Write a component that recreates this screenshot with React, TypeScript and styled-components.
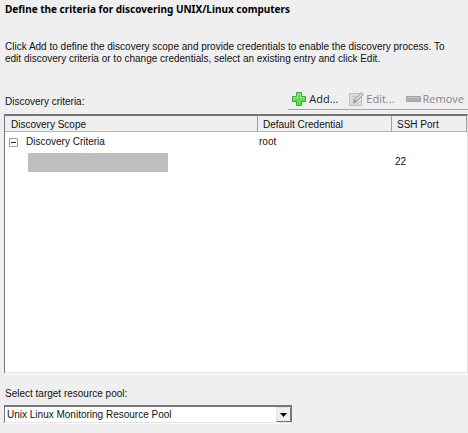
import React from 'react';
import styled, { createGlobalStyle } from 'styled-components';

const GlobalStyle = createGlobalStyle`
  *, *::before, *::after { box-sizing: border-box; }
  body {
    margin: 0;
    background: #efefef;
    color: #111;
    font: 10px/12px "Liberation Sans", Arial, sans-serif;
  }
`;

const Page = styled.main`
  display: flex;
  flex-direction: column;
  min-height: 100vh;
  padding: 2px 0 10px 4px;
`;

const Title = styled.h1`
  margin: 0;
  padding-left: 1px;
  font: bold 10px/14px "Noto Sans", Tahoma, sans-serif;
  color: #000;
`;

const Intro = styled.p`
  margin: 25px 12px 0 0;
  padding-left: 1px;
`;

const ListBar = styled.div`
  display: flex;
  justify-content: space-between;
  align-items: flex-end;
  margin: 23px 0 4px;
  padding-left: 1px;
`;

const ListLabel = styled.h2`
  margin: 0 0 2px;
  font: inherit;
`;

const Toolbar = styled.div`
  display: flex;
  gap: 11px;
  height: 22px;
  padding: 1px 4px 0 3px;
  border-bottom: 1px solid #a6a6a6;
`;

const ToolButton = styled.button`
  display: flex;
  align-items: center;
  gap: 2px;
  padding: 0;
  border: 0;
  background: none;
  font: 11px/18px "Open Sans", "Segoe UI", sans-serif;
  color: #222;

  &:disabled { color: #858585; }
  svg { display: block; flex: none; }
`;

const Panel = styled.section`
  flex: 1;
  min-height: 120px;
  background: #fff;
  border: 2px solid #757575;
  border-right: 1px solid #e2e2e2;
  border-bottom: 2px solid #ececec;
  border-left-width: 1px;
  box-shadow: 0 1px #fff;
`;

const Table = styled.table`
  width: 100%;
  border-collapse: separate;
  border-spacing: 0;
  table-layout: fixed;
`;

const ScopeCol = styled.col`width: 253px;`;
const CredentialCol = styled.col`width: 134px;`;

const HeadCell = styled.th`
  height: 16px;
  padding: 2px 0 0 5px;
  background: #efefef;
  border-right: 1px solid #a0a0a0;
  border-bottom: 1px solid #b5b5b5;
  font-weight: normal;
  text-align: left;

  &:first-child { padding-left: 6px; }
`;

const Cell = styled.td<{ $indent?: number }>`
  height: 20px;
  padding: 0 0 0 ${(p) => p.$indent ?? 1}px;
  vertical-align: middle;
`;

const TreeNode = styled.div`
  display: flex;
  align-items: center;
  gap: 8px;
`;

const Toggle = styled.button`
  display: block;
  padding: 0;
  border: 0;
  background: none;
  line-height: 0;
  svg { display: block; }
`;

const Redacted = styled.div`
  width: 140px;
  height: 19px;
  background: #bfbfbf;
`;

const PoolLabel = styled.label`
  margin: 14px 0 5px;
  padding-left: 1px;
`;

const PoolField = styled.div`
  display: grid;
  width: 288px;
  max-width: 100%;
  background: #fff;
  border: 2px solid #787878;
  border-left-width: 1px;
  border-right: 1px solid #787878;
  border-bottom: 1px solid #e3e3e3;
  box-shadow: 0 1px #fff;
`;

const PoolSelect = styled.select`
  grid-area: 1 / 1;
  width: 100%;
  height: 15px;
  padding: 0 20px 0 2px;
  border: 0;
  outline: 0;
  appearance: none;
  background: transparent;
  font: inherit;
  color: #111;
`;

const DropArrow = styled.span`
  grid-area: 1 / 1;
  justify-self: end;
  display: grid;
  place-items: center;
  width: 15px;
  background: #efefef;
  border: 1px solid #e3e3e3;
  border-right: 1px solid #777;
  border-bottom: 1px solid #777;
  pointer-events: none;
`;

const AddIcon = () => (
  <svg width="16" height="16" viewBox="0 0 16 16" aria-hidden="true">
    <path d="M5.5 1.5h5v4h4v5h-4v4h-5v-4h-4v-5h4z" fill="#62d94e" stroke="#3aa833" strokeLinejoin="round" />
    <path d="M6.5 6.5v-4h3v4h4M2.5 9v-2.5h4" fill="none" stroke="#9bed87" />
  </svg>
);

const EditIcon = () => (
  <svg width="15" height="16" viewBox="0 0 15 16" aria-hidden="true">
    <path d="M.5 2.5h12v12h-12z" fill="#dcdcdc" stroke="#bdbdbd" />
    <path d="M3 5.5h5M3 8h3M3 12h7" stroke="#c4c4c4" />
    <path d="M4.5 11.5l1-3 7-7 2 2-7 7z" fill="#d2d2d2" stroke="#a3a3a3" />
    <path d="M4.5 11.5l1-3 2 2z" fill="#888" />
  </svg>
);

const RemoveIcon = () => (
  <svg width="15" height="16" viewBox="0 0 15 16" aria-hidden="true">
    <path d="M.5 5.5h14v5h-14z" fill="#b0b0b0" stroke="#a3a3a3" />
    <path d="M1.5 6.5h12" stroke="#c2c2c2" />
  </svg>
);

const CollapseIcon = () => (
  <svg width="9" height="9" viewBox="0 0 9 9" aria-hidden="true">
    <path d="M.5.5h8v8h-8z" fill="#fff" stroke="#a0a0a0" />
    <path d="M2 4.5h5" stroke="#222" />
  </svg>
);

export default function App() {
  return (
    <>
      <GlobalStyle />
      <Page>
        <Title>Define the criteria for discovering UNIX/Linux computers</Title>
        <Intro>
          Click Add to define the discovery scope and provide credentials to enable the discovery
          process. To edit discovery criteria or to change credentials, select an existing entry
          and click Edit.
        </Intro>
        <ListBar>
          <ListLabel id="criteria-label">Discovery criteria:</ListLabel>
          <Toolbar role="toolbar" aria-labelledby="criteria-label">
            <ToolButton type="button"><AddIcon />Add...</ToolButton>
            <ToolButton type="button" disabled><EditIcon />Edit...</ToolButton>
            <ToolButton type="button" disabled><RemoveIcon />Remove</ToolButton>
          </Toolbar>
        </ListBar>
        <Panel>
          <Table aria-labelledby="criteria-label">
            <colgroup>
              <ScopeCol />
              <CredentialCol />
              <col />
            </colgroup>
            <thead>
              <tr>
                <HeadCell scope="col">Discovery Scope</HeadCell>
                <HeadCell scope="col">Default Credential</HeadCell>
                <HeadCell scope="col">SSH Port</HeadCell>
              </tr>
            </thead>
            <tbody>
              <tr>
                <Cell $indent={4}>
                  <TreeNode>
                    <Toggle type="button" aria-expanded="true" aria-label="Collapse Discovery Criteria">
                      <CollapseIcon />
                    </Toggle>
                    Discovery Criteria
                  </TreeNode>
                </Cell>
                <Cell>root</Cell>
                <Cell />
              </tr>
              <tr>
                <Cell $indent={23}><Redacted /></Cell>
                <Cell />
                <Cell $indent={3}>22</Cell>
              </tr>
            </tbody>
          </Table>
        </Panel>
        <PoolLabel htmlFor="pool">Select target resource pool:</PoolLabel>
        <PoolField>
          <PoolSelect id="pool" defaultValue="unix-linux">
            <option value="unix-linux">Unix Linux Monitoring Resource Pool</option>
          </PoolSelect>
          <DropArrow>
            <svg width="7" height="4" viewBox="0 0 7 4" aria-hidden="true">
              <path d="M0 0h7L3.5 4z" fill="#000" />
            </svg>
          </DropArrow>
        </PoolField>
      </Page>
    </>
  );
}
